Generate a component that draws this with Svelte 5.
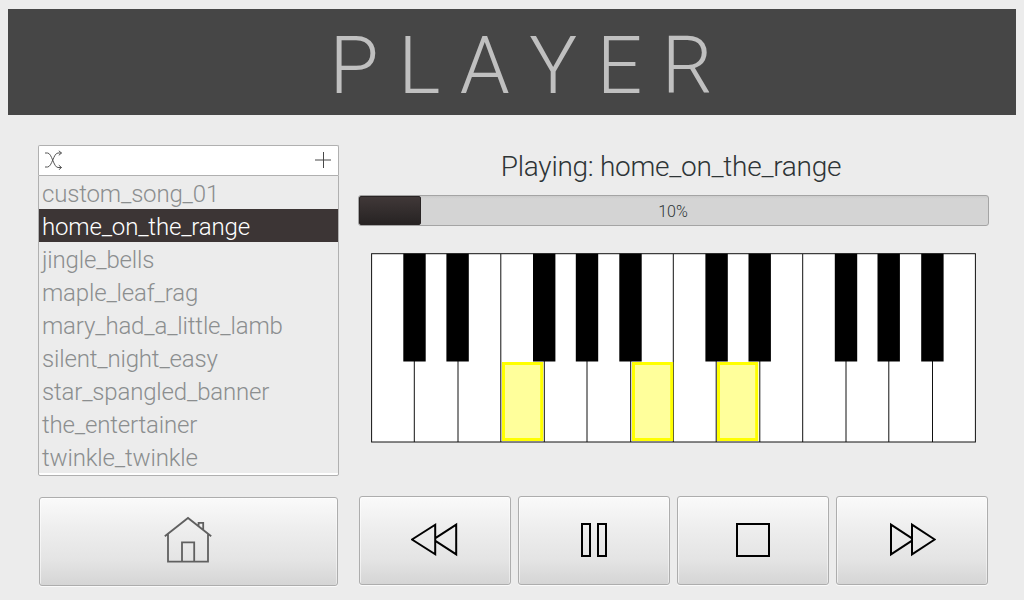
<script>
  const songs = [
    'custom_song_01',
    'home_on_the_range',
    'jingle_bells',
    'maple_leaf_rag',
    'mary_had_a_little_lamb',
    'silent_night_easy',
    'star_spangled_banner',
    'the_entertainer',
    'twinkle_twinkle'
  ];
  let current = $state('home_on_the_range');
  const progress = 10;

  const dividers = [43.3, 87, 129.8, 173.3, 216, 259.7, 302.3, 345.2, 388.8, 431.7, 475, 517.8, 561.5];
  const blackKeys = [32.3, 75.4, 162, 204.8, 248.3, 334.4, 377.5, 463.8, 506.5, 550.2];
  const pressed = [131, 261, 346];
</script>

<div class="page">
  <header><h1>P L A Y E R</h1></header>

  <main>
    <section class="library">
      <div class="toolbar">
        <svg width="20" height="20" viewBox="0 0 20 20" fill="none" stroke="#555" stroke-width="1">
          <path d="M1 3H3.5C8 3 9.5 17.5 14 17.5H17.5M1 17H3.5C8 17 9.5 3 14 3H17.5M14.8 .8L17.5 3L14.8 5.3M14.8 15.2L17.5 17.5L14.8 19.8" />
        </svg>
        <svg width="18" height="18" viewBox="0 0 18 18" fill="none" stroke="#484848" stroke-width="1">
          <path d="M1 9H17M9.5 1V17" />
        </svg>
      </div>
      <ul>
        {#each songs as song}
          <li><button class="song" class:selected={song === current} onclick={() => (current = song)}>{song}</button></li>
        {/each}
      </ul>
      <button class="btn home" aria-label="Home">
        <svg width="50" height="50" viewBox="0 0 50 50" fill="none" stroke="#606060" stroke-width="1.8">
          <path d="M1.8 20.2L25 2L48.2 20.2M5 18V45.7H45V18M19 45.7V26.3H31.2V45.7M35.6 10V6.8H40.2V13.5" />
        </svg>
      </button>
    </section>

    <section class="player">
      <p class="playing">Playing: {current}</p>
      <div class="progress">
        <div class="fill" style="width: {progress}%"></div>
        <span>{progress}%</span>
      </div>

      <svg class="piano" width="606" height="191" viewBox="0 0 606 191">
        <rect x="0.6" y="0.7" width="603.8" height="188.3" fill="#fff" stroke="#111" />
        {#each dividers as x}
          <path d="M{x} 1V189" stroke="#111" />
        {/each}
        {#each pressed as x}
          <rect x={x + 1.5} y="110.5" width="38.2" height="76" fill="#ffff9b" stroke="#ff0" stroke-width="3" />
        {/each}
        {#each blackKeys as x}
          <rect {x} y="0.7" width="22.4" height="107.8" />
        {/each}
      </svg>

      <div class="controls">
        <button class="btn" aria-label="Rewind">
          <svg width="48" height="36" viewBox="0 0 48 36">
            <path d="M1 17.5L24.2 2.7V32.3ZM24 16.4L45.2 2.7V32.3L24 18.6" />
          </svg>
        </button>
        <button class="btn" aria-label="Pause">
          <svg width="48" height="36" viewBox="0 0 48 36">
            <path d="M12 2H20V34H12ZM28 2H36V34H28Z" />
          </svg>
        </button>
        <button class="btn" aria-label="Stop">
          <svg width="48" height="36" viewBox="0 0 48 36">
            <path d="M8 2H40V34H8Z" />
          </svg>
        </button>
        <button class="btn" aria-label="Fast forward">
          <svg width="48" height="36" viewBox="0 0 48 36">
            <path d="M24 16.4L3 2.7V32.3L24 18.6M24 2.7V32.3L46.7 17.5Z" />
          </svg>
        </button>
      </div>
    </section>
  </main>
</div>

<style>
  :global(body) {
    margin: 0;
    background: #ececec;
  }
  * {
    box-sizing: border-box;
  }
  .page {
    width: 1024px;
    height: 600px;
    padding: 9px 8px 0;
    overflow: hidden;
    background: #ececec;
    font-family: Roboto, sans-serif;
    font-weight: 300;
    color: #2e3436;
  }
  header {
    height: 106px;
    background: #464646;
    display: flex;
    justify-content: center;
  }
  h1 {
    margin: 0;
    padding-left: 18px;
    font-size: 80px;
    font-weight: 300;
    line-height: 114px;
    color: #c0c0c0;
    white-space: pre;
  }
  main {
    display: grid;
    grid-template-columns: 301px 631px;
    column-gap: 19px;
    padding: 30px 0 0 30px;
  }
  .toolbar {
    height: 30px;
    padding: 0 6px 1px 5px;
    display: flex;
    align-items: center;
    justify-content: space-between;
    background: #fff;
    border: 1px solid #b0b0b0;
    border-bottom: 0;
    border-radius: 2px 2px 0 0;
  }
  ul {
    height: 301px;
    margin: 0;
    padding: 0;
    list-style: none;
    border: 1px solid #b0b0b0;
    border-radius: 0 0 2px 2px;
    background: #fff;
  }
  .song {
    display: block;
    width: 100%;
    height: 33px;
    padding: 3px 3px 0;
    border: 0;
    background: #ececec;
    color: #8b8e8f;
    font: 300 24px/30px Roboto, sans-serif;
    letter-spacing: -0.17px;
    text-align: left;
  }
  .song.selected {
    background: #3c3535;
    color: #fff;
  }
  .btn {
    height: 89px;
    padding: 0;
    display: flex;
    align-items: center;
    justify-content: center;
    border: 1px solid #adadad;
    border-radius: 3px;
    background: linear-gradient(#fafafa, #eeeeee 35%, #e4e4e4 72%, #d5d5d5);
    box-shadow: inset 1px 1px 0 #ffffff90, inset -1px 0 0 #ffffff70, 0 1px 0 #fafafa;
  }
  .home {
    width: 299px;
    margin: 21px 0 0 1px;
  }
  .home svg {
    margin: -1px 2px 0 0;
  }
  .playing {
    height: 50px;
    margin: 0;
    padding-right: 5px;
    font-size: 28px;
    line-height: 43px;
    letter-spacing: -0.28px;
    text-align: center;
  }
  .progress {
    position: relative;
    height: 31px;
    padding-right: 8px;
    border: 1px solid #a4a4a4;
    border-radius: 3px;
    background: linear-gradient(#cbcbcb, #d4d4d4 3px);
  }
  .fill {
    height: 29px;
    border: 1px solid #292424;
    border-radius: 2px;
    background: linear-gradient(#403838, #272323);
  }
  .progress span {
    position: absolute;
    inset: 0 1px 0 0;
    font-size: 16px;
    line-height: 31px;
    text-align: center;
  }
  .piano {
    display: block;
    margin: 27px 0 0 13px;
  }
  .controls {
    display: grid;
    grid-template-columns: repeat(4, 152px);
    column-gap: 7px;
    margin: 52px 0 0 1px;
  }
  .controls svg {
    margin-bottom: 1px;
  }
  .controls path {
    fill: none;
    stroke: #000;
    stroke-width: 2;
  }
</style>
